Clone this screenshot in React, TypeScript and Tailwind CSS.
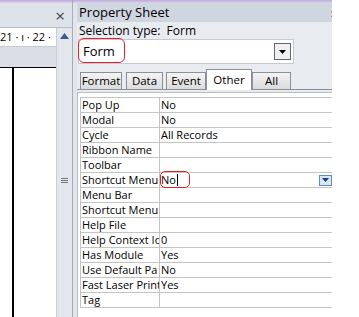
import React from "react";

const rows: [string, string][] = [
  ["Pop Up", "No"],
  ["Modal", "No"],
  ["Cycle", "All Records"],
  ["Ribbon Name", ""],
  ["Toolbar", ""],
  ["Shortcut Menu", "No"],
  ["Menu Bar", ""],
  ["Shortcut Menu", ""],
  ["Help File", ""],
  ["Help Context Id", "0"],
  ["Has Module", "Yes"],
  ["Use Default Pa", "No"],
  ["Fast Laser Print", "Yes"],
  ["Tag", ""],
];

const font = { fontFamily: '"Open Sans", "DejaVu Sans", sans-serif' };

function Tab({ label, w, active }: { label: string; w: string; active?: boolean }) {
  if (active) {
    return (
      <div className={`${w} h-[21px] bg-white border border-b-0 border-[#8d9098] flex items-center justify-center text-[11.5px] text-black -mb-px relative z-10`}>
        {label}
      </div>
    );
  }
  return (
    <div className={`${w} h-[17px] bg-gradient-to-b from-[#f4f4f4] to-[#dcdcdc] border border-b-0 border-[#8d9098] flex items-center justify-center text-[11.5px] text-black`}>
      {label}
    </div>
  );
}

export default function App() {
  return (
    <div className="w-[359px] h-[317px] bg-white flex overflow-hidden text-black" style={font}>
      {/* left design pane */}
      <div className="w-[73px] flex flex-col border-r border-[#a9adb5]">
        <div className="h-[3px] bg-gradient-to-b from-[#bba9d8] to-[#ddd3ec]" />
        <div className="h-[25px] bg-[#dde1e8] flex items-center justify-end pr-[7px] border-b border-[#b8bcc4]">
          <span className="text-[17px] leading-none text-[#444]">×</span>
        </div>
        <div className="flex flex-1">
          <div className="flex-1 flex flex-col">
            <div className="h-[19px] bg-white flex items-center text-[11px] whitespace-nowrap overflow-hidden border-b border-[#c5c9d0]">
              <span>21 · ı · 22 ·</span>
            </div>
            <div className="h-[21px] bg-[#dadee6] border-b border-black" />
            <div className="flex-1 bg-white flex">
              <div className="w-[12px]" />
              <div className="w-[2px] bg-black" />
            </div>
          </div>
          <div className="w-[16px] bg-[#e3e6ec] border-l border-[#c8ccd3] flex flex-col items-center">
            <div className="h-[14px] w-full flex items-center justify-center mt-[1px]">
              <svg width="9" height="6" viewBox="0 0 9 6">
                <path d="M0 6 L4.5 0 L9 6 Z" fill="#3c5a8a" />
              </svg>
            </div>
            <div className="flex-1 flex items-center justify-center">
              <svg width="7" height="5" viewBox="0 0 7 5">
                <path d="M0 0.5 H7 M0 2.5 H7 M0 4.5 H7" stroke="#777" strokeWidth="1" />
              </svg>
            </div>
          </div>
        </div>
      </div>

      {/* splitter */}
      <div className="w-[4px] bg-[#e2e5eb] flex flex-col">
        <div className="h-[3px] bg-gradient-to-b from-[#bba9d8] to-[#ddd3ec]" />
      </div>

      {/* property sheet */}
      <div className="w-[255px] flex flex-col bg-[#e8ebf0]">
        <div className="h-[3px] bg-gradient-to-b from-[#bba9d8] to-[#ddd3ec]" />
        <div className="h-[19px] bg-[#d0d6df] flex items-center justify-between pl-[2px]">
          <span className="text-[13px] leading-none">Property Sheet</span>
          <span className="text-[15px] leading-none text-[#555] -mr-[4px] font-bold">›</span>
        </div>
        <div className="h-[17px] flex items-center pl-[2px] text-[12px]">
          Selection type:&nbsp;&nbsp;Form
        </div>
        <div className="h-[25px] mx-[1px] mr-[38px] bg-white border border-[#c5c9d0] flex items-center relative">
          <div className="absolute left-[-1px] top-[-2px] w-[47px] h-[25px] border border-[#e0202a] rounded-[6px]" />
          <span className="text-[13px] pl-[4px]">Form</span>
          <div className="ml-auto mr-[2px] w-[17px] h-[17px] border border-[#666] bg-[#eef0f3] flex items-center justify-center">
            <svg width="7" height="4" viewBox="0 0 7 4">
              <path d="M0 0 H7 L3.5 4 Z" fill="#000" />
            </svg>
          </div>
        </div>
        <div className="h-[26px] flex items-end pl-[3px] border-b border-[#8d9098]">
          <Tab label="Format" w="w-[42px]" />
          <div className="w-[4px]" />
          <Tab label="Data" w="w-[37px]" />
          <div className="w-[3px]" />
          <Tab label="Event" w="w-[40px]" />
          <Tab label="Other" w="w-[46px]" active />
          <Tab label="All" w="w-[39px]" />
        </div>
        <div className="flex-1 bg-white border-l border-t border-[#b9bdc5] mt-[2px] pl-[2px] pt-[4px]">
          <div className="border-l border-t border-[#c4c4c4]">
            {rows.map(([label, value], i) => (
              <div key={i} className="flex h-[15px] border-b border-[#c4c4c4] text-[11px] leading-[14px]">
                <div className="w-[79px] border-r border-[#c4c4c4] pl-[1px] whitespace-nowrap overflow-hidden">
                  {label}
                </div>
                <div className="flex-1 pl-[1px] relative flex items-center">
                  {i === 5 ? (
                    <>
                      <div className="absolute left-[0px] top-[-2px] w-[30px] h-[17px] border border-[#e0202a] rounded-[5px]" />
                      <span>No</span>
                      <span className="w-[1px] h-[12px] bg-black ml-[1px]" />
                      <div className="ml-auto w-[13px] h-[11px] border border-[#5b8ed1] bg-[#d7e6f8] flex items-center justify-center">
                        <svg width="7" height="4" viewBox="0 0 7 4">
                          <path d="M0 0 H7 L3.5 4 Z" fill="#1c3e6e" />
                        </svg>
                      </div>
                    </>
                  ) : (
                    <span>{value}</span>
                  )}
                </div>
              </div>
            ))}
          </div>
        </div>
      </div>
      <div className="flex-1 bg-white" />
    </div>
  );
}
